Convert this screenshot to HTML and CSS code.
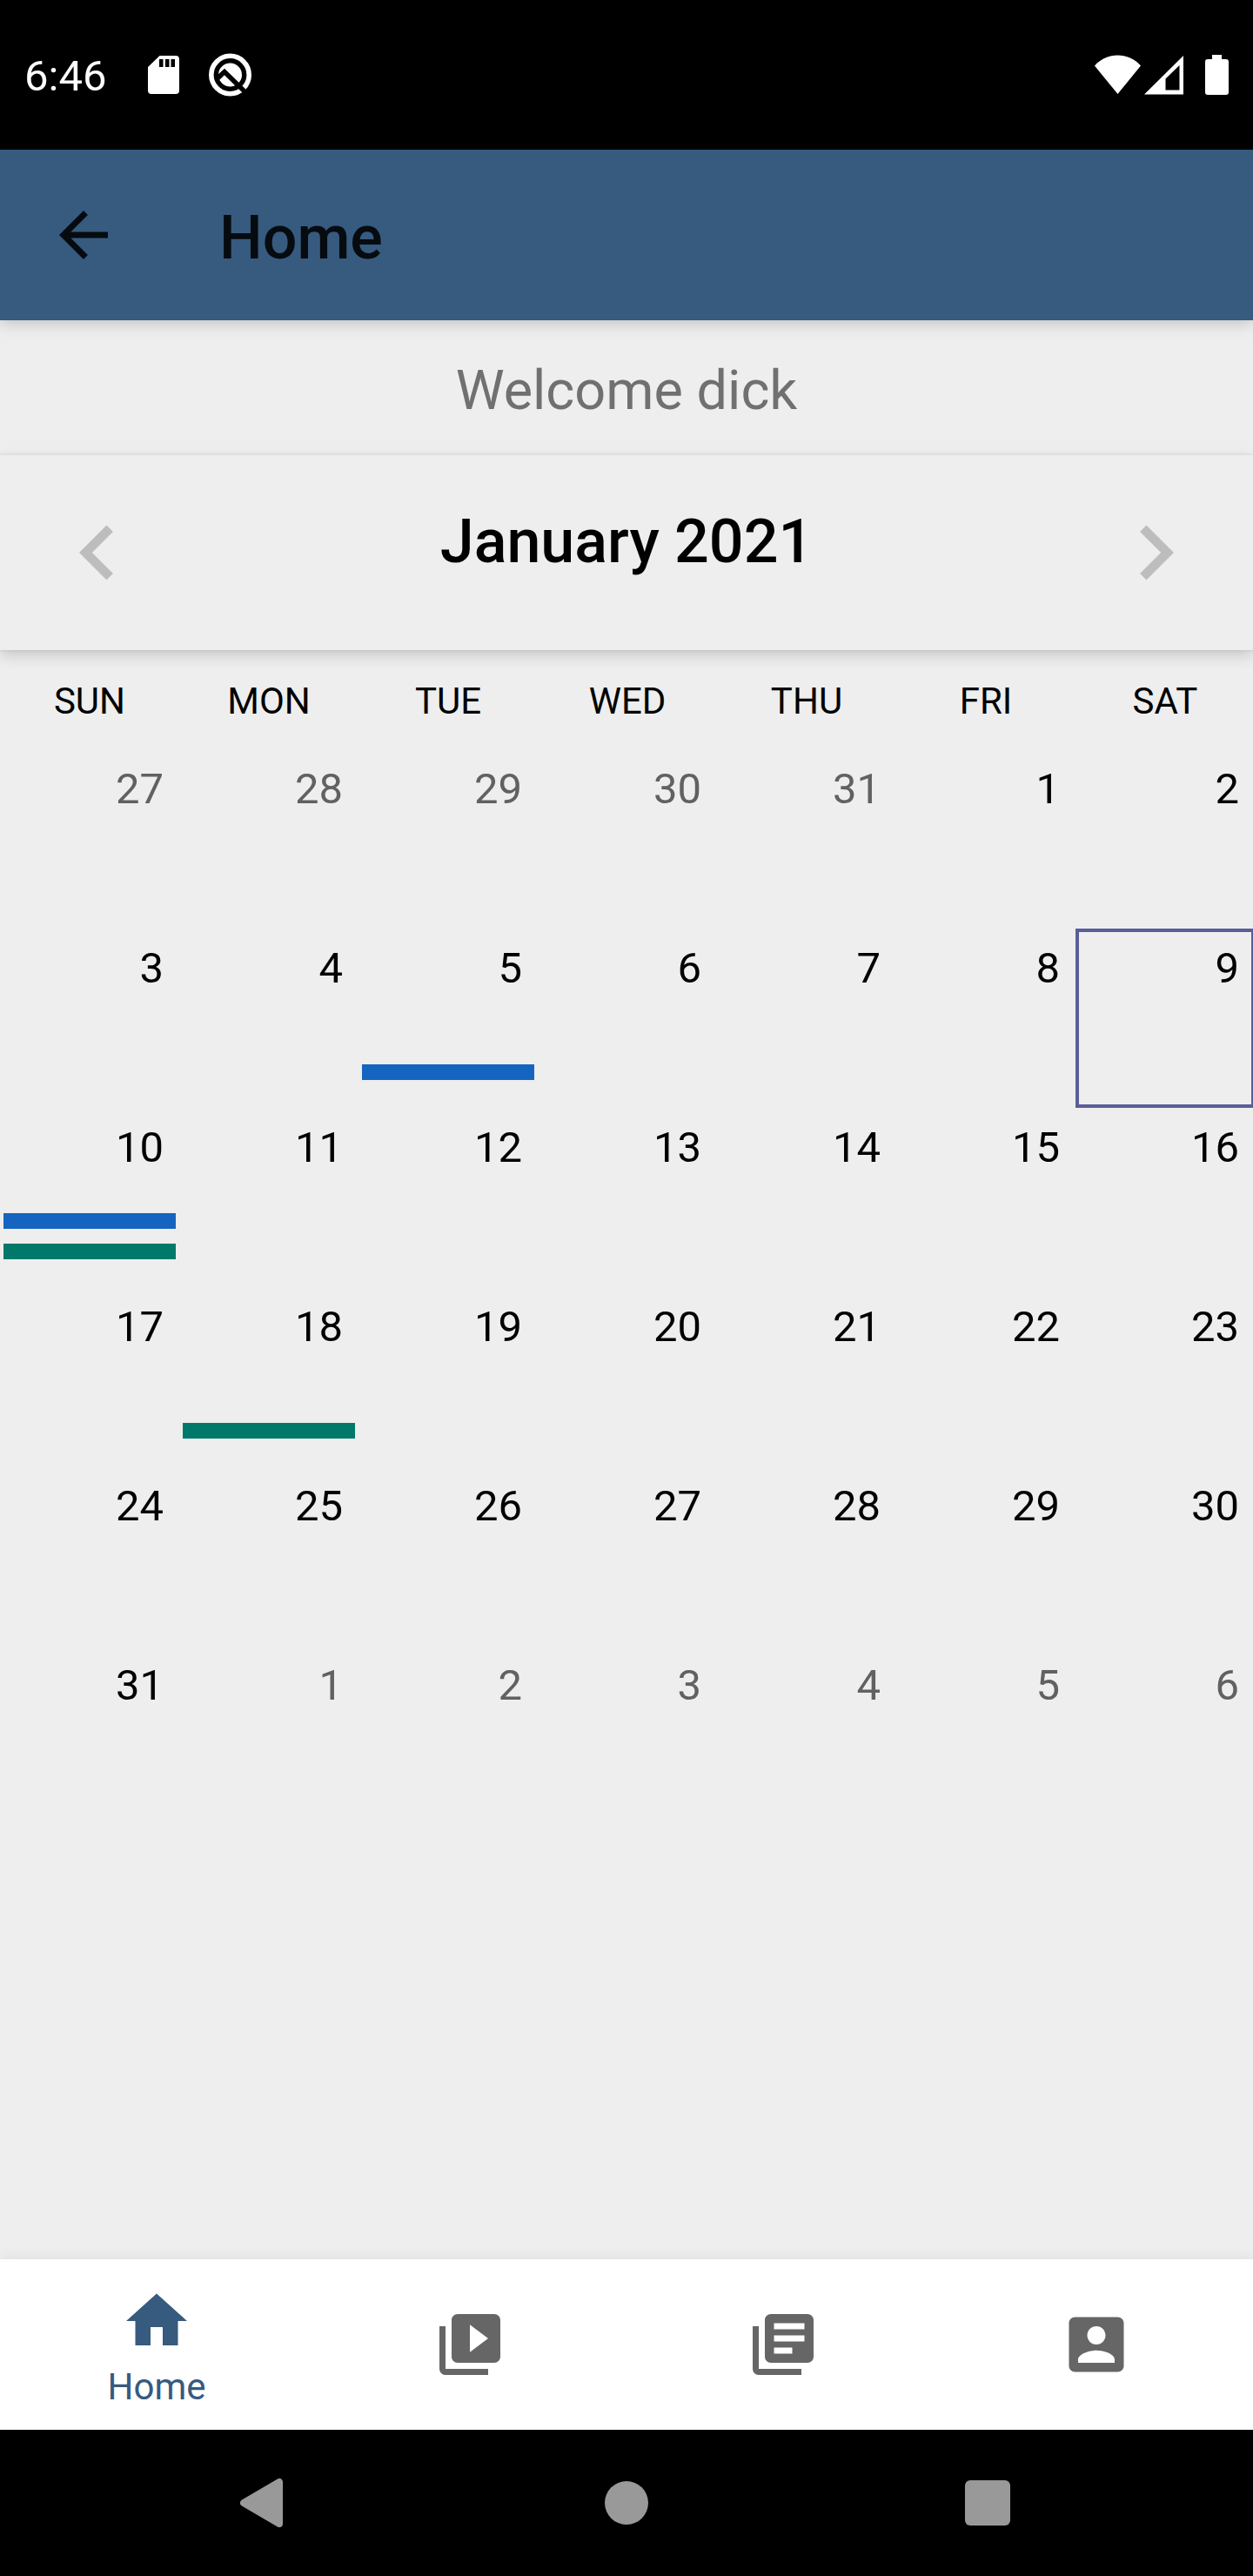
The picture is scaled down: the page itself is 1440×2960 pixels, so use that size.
FILE: index.html
```html
<!DOCTYPE html>
<html lang="en">
<head>
<meta charset="utf-8">
<meta name="viewport" content="width=device-width, initial-scale=1">
<title>Home</title>
<link rel="stylesheet" href="styles.css">
</head>
<body>
<div class="screen">
  <div class="status-bar">
    <div class="status-group status-left">
      <time class="clock">6:46</time>
      <svg class="icon-sd" viewBox="0 0 36 46" aria-hidden="true"><path fill="#fff" fill-rule="evenodd" d="M13.500 1H32a4 4 0 0 1 4 4v36a4 4 0 0 1-4 4H4a4 4 0 0 1-4-4V14zM13 5v9h4.500V5zM20 5v9h4.500V5zM26.500 5v9H31V5z"/></svg>
      <svg class="icon-q" viewBox="0 0 50 50" aria-hidden="true"><circle cx="24.500" cy="25" r="21.700" fill="none" stroke="#fff" stroke-width="5.600"/><circle cx="24.500" cy="25" r="13.500" fill="#fff"/><path d="M9 30l9-8.500L41 44" fill="none" stroke="#000" stroke-width="5.500"/></svg>
    </div>
    <div class="status-group status-right">
      <svg class="icon-wifi" viewBox="0 0 53 46" aria-hidden="true"><path fill="#fff" d="M26.500 45L0 12.500C14-3.500 39-3.500 53 12.500z"/></svg>
      <svg class="icon-signal" viewBox="0 0 45 46" aria-hidden="true"><path fill="#fff" fill-rule="evenodd" d="M45 1v44.500H0zM40.500 12L24.500 27.500v13h16z"/></svg>
      <svg class="icon-battery" viewBox="0 0 27 46" aria-hidden="true"><path fill="#fff" d="M8 0h11v5h5a3 3 0 0 1 3 3v35a3 3 0 0 1-3 3H3a3 3 0 0 1-3-3V8a3 3 0 0 1 3-3h5z"/></svg>
    </div>
  </div>

  <header class="app-bar">
    <button class="icon-button" type="button" aria-label="Back"><svg class="icon" viewBox="0 0 24 24"><path d="M20 11H7.830l5.590-5.590L12 4l-8 8 8 8 1.410-1.410L7.830 13H20v-2z"/></svg></button>
    <h1 class="app-title">Home</h1>
  </header>

  <main class="content">
    <p class="welcome">Welcome dick</p>
    <div class="month-bar">
      <button class="icon-button month-step" type="button" aria-label="Previous month"><svg class="icon-large" viewBox="0 0 24 24"><path d="M15.410 7.410L14 6l-6 6 6 6 1.410-1.410L10.830 12z"/></svg></button>
      <h2 class="month-title">January 2021</h2>
      <button class="icon-button month-step" type="button" aria-label="Next month"><svg class="icon-large" viewBox="0 0 24 24"><path d="M10 6L8.590 7.410 13.170 12l-4.580 4.590L10 18l6-6z"/></svg></button>
    </div>
    <table class="calendar">
      <thead>
        <tr><th scope="col">SUN</th><th scope="col">MON</th><th scope="col">TUE</th><th scope="col">WED</th><th scope="col">THU</th><th scope="col">FRI</th><th scope="col">SAT</th></tr>
      </thead>
      <tbody>
        <tr>
          <td><button type="button" class="day other">27</button></td>
          <td><button type="button" class="day other">28</button></td>
          <td><button type="button" class="day other">29</button></td>
          <td><button type="button" class="day other">30</button></td>
          <td><button type="button" class="day other">31</button></td>
          <td><button type="button" class="day">1</button></td>
          <td><button type="button" class="day">2</button></td>
        </tr>
        <tr>
          <td><button type="button" class="day">3</button></td>
          <td><button type="button" class="day">4</button></td>
          <td><button type="button" class="day">5<span class="events"><span class="event blue"></span></span></button></td>
          <td><button type="button" class="day">6</button></td>
          <td><button type="button" class="day">7</button></td>
          <td><button type="button" class="day">8</button></td>
          <td><button type="button" class="day today" aria-current="date">9</button></td>
        </tr>
        <tr>
          <td><button type="button" class="day">10<span class="events"><span class="event blue"></span><span class="event green"></span></span></button></td>
          <td><button type="button" class="day">11</button></td>
          <td><button type="button" class="day">12</button></td>
          <td><button type="button" class="day">13</button></td>
          <td><button type="button" class="day">14</button></td>
          <td><button type="button" class="day">15</button></td>
          <td><button type="button" class="day">16</button></td>
        </tr>
        <tr>
          <td><button type="button" class="day">17</button></td>
          <td><button type="button" class="day">18<span class="events"><span class="event green"></span></span></button></td>
          <td><button type="button" class="day">19</button></td>
          <td><button type="button" class="day">20</button></td>
          <td><button type="button" class="day">21</button></td>
          <td><button type="button" class="day">22</button></td>
          <td><button type="button" class="day">23</button></td>
        </tr>
        <tr>
          <td><button type="button" class="day">24</button></td>
          <td><button type="button" class="day">25</button></td>
          <td><button type="button" class="day">26</button></td>
          <td><button type="button" class="day">27</button></td>
          <td><button type="button" class="day">28</button></td>
          <td><button type="button" class="day">29</button></td>
          <td><button type="button" class="day">30</button></td>
        </tr>
        <tr>
          <td><button type="button" class="day">31</button></td>
          <td><button type="button" class="day other">1</button></td>
          <td><button type="button" class="day other">2</button></td>
          <td><button type="button" class="day other">3</button></td>
          <td><button type="button" class="day other">4</button></td>
          <td><button type="button" class="day other">5</button></td>
          <td><button type="button" class="day other">6</button></td>
        </tr>
      </tbody>
    </table>
  </main>

  <nav class="bottom-nav" aria-label="Main">
    <a class="nav-item active" href="#home" aria-current="page"><svg class="icon" viewBox="0 0 24 24" aria-hidden="true"><path d="M10 20v-6h4v6h5v-8h3L12 3 2 12h3v8z"/></svg><span>Home</span></a>
    <a class="nav-item" href="#videos" aria-label="Videos"><svg class="icon" viewBox="0 0 24 24"><path d="M4 6H2v14c0 1.100.9 2 2 2h14v-2H4V6zm16-4H8c-1.100 0-2 .9-2 2v12c0 1.100.9 2 2 2h12c1.100 0 2-.9 2-2V4c0-1.100-.9-2-2-2zm-8 12.500v-9l6 4.500-6 4.500z"/></svg></a>
    <a class="nav-item" href="#library" aria-label="Library"><svg class="icon" viewBox="0 0 24 24"><path d="M4 6H2v14c0 1.100.9 2 2 2h14v-2H4V6zm16-4H8c-1.100 0-2 .9-2 2v12c0 1.100.9 2 2 2h12c1.100 0 2-.9 2-2V4c0-1.100-.9-2-2-2zm-1 9H9V9h10v2zm-4 4H9v-2h6v2zm4-8H9V5h10v2z"/></svg></a>
    <a class="nav-item" href="#account" aria-label="Account"><svg class="icon" viewBox="0 0 24 24"><path d="M3 5v14c0 1.100.89 2 2 2h14c1.100 0 2-.9 2-2V5c0-1.100-.9-2-2-2H5c-1.110 0-2 .9-2 2zm12 4c0 1.660-1.340 3-3 3s-3-1.340-3-3 1.340-3 3-3 3 1.340 3 3zm-9 8c0-2 4-3.100 6-3.100s6 1.100 6 3.100v1H6v-1z"/></svg></a>
  </nav>

  <div class="system-nav">
    <button class="icon-button" type="button" aria-label="System back"><svg class="icon-system" viewBox="0 0 60 60"><path d="M46 6v48L5 30z" stroke="currentColor" stroke-width="8" stroke-linejoin="round"/></svg></button>
    <button class="icon-button" type="button" aria-label="System home"><svg class="icon-system" viewBox="0 0 60 60"><circle cx="30" cy="30" r="25"/></svg></button>
    <button class="icon-button" type="button" aria-label="Recent apps"><svg class="icon-system" viewBox="0 0 60 60"><rect x="4" y="4" width="52" height="52" rx="6"/></svg></button>
  </div>
</div>
</body>
</html>
```
FILE: styles.css
```css
* { box-sizing: border-box; }

body {
  margin: 0;
  background: #eee;
  color: #000;
  font-family: Roboto, "Liberation Sans", sans-serif;
}

h1, h2, p { margin: 0; font-weight: 400; }

svg { display: block; fill: currentColor; }

button {
  margin: 0;
  padding: 0;
  border: 0;
  background: none;
  color: inherit;
  font: inherit;
}

.screen {
  display: flex;
  flex-direction: column;
  min-height: 100vh;
}

.icon { width: 84px; height: 84px; }
.icon-large { width: 126px; height: 126px; }
.icon-system { width: 60px; height: 60px; }

/* Status bar */
.status-bar {
  display: flex;
  justify-content: space-between;
  padding: 57px 28px;
  background: #000;
  color: #fff;
}
.status-group { display: flex; align-items: center; height: 58px; }
.clock { padding-top: 4px; font-size: 49px; line-height: 58px; }
.icon-sd { width: 36px; height: 46px; margin-left: 48px; }
.icon-q { width: 50px; height: 50px; margin-left: 34px; }
.icon-wifi { width: 53px; height: 46px; }
.icon-signal { width: 45px; height: 46px; margin-left: 4px; }
.icon-battery { width: 27px; height: 46px; margin-left: 25px; }

/* App bar */
.app-bar {
  position: relative;
  z-index: 1;
  display: flex;
  align-items: center;
  gap: 114px;
  min-height: 196px;
  padding: 0 54px;
  background: #375a7f;
  color: #060b10;
  box-shadow: 0 4px 16px rgba(0, 0, 0, .18);
}
.app-title {
  padding-top: 6px;
  font-size: 70px;
  font-weight: 500;
  line-height: 82px;
}

/* Month header */
.content { flex: 1; overflow: hidden; }
.welcome {
  padding: 44px 0 37px;
  color: #707070;
  font-size: 63px;
  line-height: 74px;
  text-align: center;
}
.month-bar {
  position: relative;
  display: flex;
  align-items: center;
  justify-content: space-between;
  min-height: 224px;
  padding: 0 49px;
  background: #eee;
  box-shadow: 0 6px 16px rgba(0, 0, 0, .16), 0 0 4px rgba(0, 0, 0, .1);
}
.month-step { color: #bdbdbd; }
.month-title {
  padding-bottom: 26px;
  font-size: 70px;
  font-weight: 500;
  line-height: 82px;
}

/* Calendar: the last column runs slightly past the screen edge */
.calendar {
  width: calc(100% + 2px);
  border-collapse: collapse;
  table-layout: fixed;
}
.calendar th {
  padding: 34px 0 30px;
  font-size: 42px;
  font-weight: 400;
  line-height: 50px;
}
.calendar td { padding: 0; }
.day {
  display: flex;
  flex-direction: column;
  justify-content: flex-start;
  align-items: flex-end;
  width: 100%;
  min-height: 206px;
  padding: 17px 18px 32px 4px;
  font-size: 49px;
  line-height: 58px;
}
.other { color: #616161; }
.today {
  padding: 13px 14px 28px 0;
  border: 4px solid #595e99;
}
.events {
  display: flex;
  flex-direction: column;
  gap: 17px;
  align-self: stretch;
  margin: auto -14px 0 0;
}
.event { height: 18px; }
.blue { background: #1565c0; }
.green { background: #00796b; }

/* Bottom navigation */
.bottom-nav {
  position: relative;
  display: grid;
  grid-template-columns: repeat(4, 1fr);
  min-height: 196px;
  background: #fff;
  box-shadow: 0 0 16px rgba(0, 0, 0, .08);
}
.nav-item {
  display: flex;
  flex-direction: column;
  align-items: center;
  justify-content: center;
  color: #666;
  font-size: 42px;
  line-height: 50px;
  text-decoration: none;
}
.nav-item.active { gap: 9px; padding-top: 4px; color: #375a7f; }

/* System navigation */
.system-nav {
  display: grid;
  grid-template-columns: repeat(3, 1fr);
  min-height: 168px;
  padding: 0 97px;
  background: #000;
  color: #999;
}
.system-nav .icon-button { display: grid; place-items: center; }
```
